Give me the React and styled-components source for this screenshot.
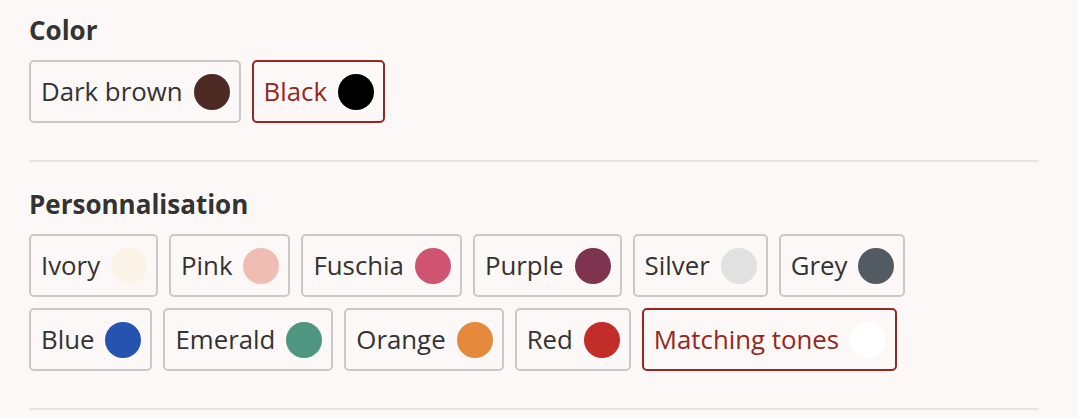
import React from "react";
import styled, { createGlobalStyle } from "styled-components";

const GlobalStyle = createGlobalStyle`
  html, body {
    margin: 0;
    padding: 0;
    background: #fcf8f7;
  }
  body {
    font-family: "Open Sans", "Noto Sans", sans-serif;
    color: #333333;
  }
`;

const Page = styled.div`
  padding: 0 40px 0 29px;
`;

const Section = styled.section`
  padding: 29px 0 37px;
  border-bottom: 2px solid #e8e4e2;
  &:first-child {
    padding-top: 17px;
  }
`;

const Heading = styled.h3`
  margin: 0 0 17px;
  font-size: 26px;
  line-height: 26px;
  font-weight: 700;
  color: #333333;
`;

const Options = styled.div`
  display: flex;
  flex-wrap: wrap;
  gap: 11px;
  max-width: ${(p) => p.$maxWidth || "none"};
`;

const Option = styled.button`
  box-sizing: border-box;
  display: inline-flex;
  align-items: center;
  gap: 11px;
  height: 63px;
  margin: 0;
  padding: 0 9px 0 10px;
  background: transparent;
  border: 2px solid ${(p) => (p.$selected ? "#972720" : "#cbc9c7")};
  border-radius: 5px;
  font-family: inherit;
  font-size: 25.8px;
  line-height: 1;
  color: ${(p) => (p.$selected ? "#972720" : "#333333")};
  cursor: pointer;
`;

const Swatch = styled.span`
  display: block;
  width: 36px;
  height: 36px;
  border-radius: 50%;
  background: ${(p) => p.$color};
  flex: none;
`;

const colors = [
  { name: "Dark brown", color: "#4e2a24" },
  { name: "Black", color: "#000000", selected: true },
];

const personalisation = [
  { name: "Ivory", color: "#fcf3e7" },
  { name: "Pink", color: "#efbdb2" },
  { name: "Fuschia", color: "#cf5472" },
  { name: "Purple", color: "#7e344f" },
  { name: "Silver", color: "#e1e1e1" },
  { name: "Grey", color: "#525a62" },
  { name: "Blue", color: "#2453b0" },
  { name: "Emerald", color: "#4f9680" },
  { name: "Orange", color: "#e58a3b" },
  { name: "Red", color: "#c22c29" },
  { name: "Matching tones", color: "#ffffff", selected: true },
];

function OptionList({ items, maxWidth }) {
  return (
    <Options $maxWidth={maxWidth}>
      {items.map((it) => (
        <Option key={it.name} $selected={it.selected}>
          {it.name}
          <Swatch $color={it.color} />
        </Option>
      ))}
    </Options>
  );
}

export default function App() {
  return (
    <>
      <GlobalStyle />
      <Page>
        <Section>
          <Heading>Color</Heading>
          <OptionList items={colors} />
        </Section>
        <Section>
          <Heading>Personnalisation</Heading>
          <OptionList items={personalisation} maxWidth="910px" />
        </Section>
      </Page>
    </>
  );
}
